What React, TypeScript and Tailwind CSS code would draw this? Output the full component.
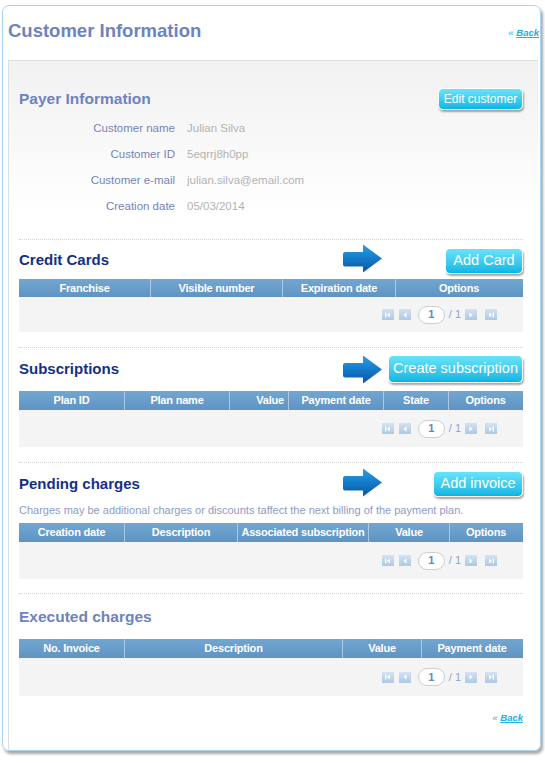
import type { ReactNode } from 'react'

// pagination glyphs, white on pale blue squares
const PagerBtn = ({ kind }: { kind: 'first' | 'prev' | 'next' | 'last' }) => (
    <span className="flex h-[11px] w-[12px] items-center justify-center bg-gradient-to-b from-[#d3e3f2] to-[#adc9e4]">
        <svg width="8" height="6" viewBox="0 0 8 6">
            {kind === 'first' && (
                <>
                    <rect x="1" y="0.5" width="1.3" height="5" fill="#fff" />
                    <path d="M6 0.5 L3 3 L6 5.5Z" fill="#fff" />
                </>
            )}
            {kind === 'prev' && <path d="M5.5 0.5 L2.5 3 L5.5 5.5Z" fill="#fff" />}
            {kind === 'next' && <path d="M2.5 0.5 L5.5 3 L2.5 5.5Z" fill="#fff" />}
            {kind === 'last' && (
                <>
                    <path d="M2 0.5 L5 3 L2 5.5Z" fill="#fff" />
                    <rect x="5.7" y="0.5" width="1.3" height="5" fill="#fff" />
                </>
            )}
        </svg>
    </span>
)

const Pager = () => (
    <div className="flex items-center">
        <PagerBtn kind="first" />
        <span className="ml-[5px]"><PagerBtn kind="prev" /></span>
        <span className="ml-[7px] flex h-[18px] w-[27px] items-center justify-center rounded-[9px] border border-[#cfcfcf] bg-white text-[11px] font-bold text-[#6f84be]">1</span>
        <span className="ml-[4px] text-[11px] text-[#8fa3cf]">/ 1</span>
        <span className="ml-[4px]"><PagerBtn kind="next" /></span>
        <span className="ml-[8px]"><PagerBtn kind="last" /></span>
    </div>
)

const BlueArrow = () => (
    <svg width="41" height="29" viewBox="0 0 41 29">
        <defs>
            <linearGradient id="arrowFill" x1="0" y1="0" x2="0" y2="1">
                <stop offset="0" stopColor="#2b9fe6" />
                <stop offset="0.55" stopColor="#1277c6" />
                <stop offset="1" stopColor="#0a56a3" />
            </linearGradient>
        </defs>
        <path d="M3 8 H21 V0.5 L40 14.5 L21 28.5 V22.5 H3 Q1 22.5 1 20.5 V10 Q1 8 3 8Z" fill="url(#arrowFill)" />
    </svg>
)

const CyanButton = ({ children, className }: { children: ReactNode; className: string }) => (
    <div className={`flex items-center justify-center whitespace-nowrap rounded-[5px] border border-white bg-gradient-to-b from-[#66e3fa] to-[#00b6e4] text-white shadow-[1px_2px_2px_rgba(0,0,0,0.35)] ${className}`}>
        {children}
    </div>
)

interface TableProps {
    grid: string
    cols: string[]
    rightCol?: number
    headH: string
    bodyH: string
}
const Table = ({ grid, cols, rightCol, headH, bodyH }: TableProps) => (
    <div>
        <div className={`grid ${grid} ${headH} bg-gradient-to-b from-[#72a6d2] to-[#5f93c2]`}>
            {cols.map((c, i) => (
                <div
                    key={c + i}
                    className={`flex items-center overflow-hidden whitespace-nowrap text-[11px] font-bold tracking-[-0.2px] text-white ${i > 0 ? 'border-l border-[#a9c9e6]' : ''} ${i === rightCol ? 'justify-end pr-[4px]' : 'justify-center'}`}
                >
                    {c}
                </div>
            ))}
        </div>
        <div className={`flex items-center justify-end bg-[#f4f4f4] pr-[26px] ${bodyH}`}>
            <Pager />
        </div>
    </div>
)

const Divider = () => <div className="border-t border-dotted border-[#d2d2d2]" />

const BackLink = () => (
    <span className="text-[9.5px] italic text-[#22ade6]">
        « <span className="font-bold underline">Back</span>
    </span>
)

const fields = [
    ['Customer name', 'Julian Silva'],
    ['Customer ID', '5eqrrj8h0pp'],
    ['Customer e-mail', 'julian.silva@email.com'],
    ['Creation date', '05/03/2014'],
]

export default function App() {
    return (
        <div className="min-h-[763px] bg-white pt-[5px] pl-[2px] font-['Liberation_Sans',Arial,sans-serif]">
            <div className="h-[746px] w-[539px] overflow-hidden rounded-[7px] border border-[#a8d4f3] shadow-[2px_3px_3px_rgba(0,0,0,0.35)]">
                <div className="flex h-[54px] items-center justify-between pl-[5px] pb-[4px]">
                    <h1 className="text-[18.5px] font-bold text-[#6d83bd]">Customer Information</h1>
                    <span className="mr-[1px]"><BackLink /></span>
                </div>

                <div className="ml-[5px] mr-[2px] border-t border-l border-[#dedede] bg-gradient-to-b from-[#f1f1f1] from-0% to-white to-[22%] pl-[10px] pr-[15px] pt-[27px]">
                    {/* payer */}
                    <div className="flex h-[21px] items-center justify-between">
                        <h2 className="text-[15.5px] font-bold text-[#6d83bd]">Payer Information</h2>
                        <CyanButton className="h-[22px] w-[85px] text-[12px]">Edit customer</CyanButton>
                    </div>
                    <div className="mt-[7px]">
                        {fields.map(([k, v]) => (
                            <div key={k} className="flex h-[26px] items-center text-[11.5px]">
                                <span className="w-[156px] text-right text-[#7683bb]">{k}</span>
                                <span className="ml-[12px] text-[#b3b3b3]">{v}</span>
                            </div>
                        ))}
                    </div>
                    <div className="mt-[19px]"><Divider /></div>

                    {/* credit cards */}
                    <div className="mt-[4px] flex h-[29px] items-center">
                        <h2 className="flex-1 pt-[4px] text-[15px] font-bold text-[#13308a]">Credit Cards</h2>
                        <BlueArrow />
                        <CyanButton className="ml-[62px] mt-[4px] h-[26px] w-[78px] text-[14.5px]">Add Card</CyanButton>
                    </div>
                    <div className="mt-[6px]">
                        <Table
                            grid="grid-cols-[131px_132px_113px_127px]"
                            cols={['Franchise', 'Visible number', 'Expiration date', 'Options']}
                            headH="h-[18px]"
                            bodyH="h-[35px]"
                        />
                    </div>
                    <div className="mt-[15px]"><Divider /></div>

                    {/* subscriptions */}
                    <div className="mt-[7px] flex h-[28px] items-center">
                        <h2 className="flex-1 pt-[1px] text-[15px] font-bold text-[#13308a]">Subscriptions</h2>
                        <BlueArrow />
                        <CyanButton className="ml-[5px] h-[28px] w-[135px] text-[14.5px]">Create subscription</CyanButton>
                    </div>
                    <div className="mt-[8px]">
                        <Table
                            grid="grid-cols-[105px_105px_59px_95px_65px_74px]"
                            cols={['Plan ID', 'Plan name', 'Value', 'Payment date', 'State', 'Options']}
                            rightCol={2}
                            headH="h-[19px]"
                            bodyH="h-[37px]"
                        />
                    </div>
                    <div className="mt-[15px]"><Divider /></div>

                    {/* pending charges */}
                    <div className="mt-[5px] flex h-[29px] items-center">
                        <h2 className="flex-1 pt-[3px] text-[15px] font-bold text-[#13308a]">Pending charges</h2>
                        <BlueArrow />
                        <CyanButton className="ml-[50px] mt-[2px] h-[26px] w-[90px] text-[14.5px]">Add invoice</CyanButton>
                    </div>
                    <p className="mt-[6px] text-[11px] leading-[14px] text-[#8d9bc9]">
                        Charges may be additional charges or discounts taffect the next billing of the payment plan.
                    </p>
                    <div className="mt-[6px]">
                        <Table
                            grid="grid-cols-[105px_113px_131px_81px_73px]"
                            cols={['Creation date', 'Description', 'Associated subscription', 'Value', 'Options']}
                            headH="h-[19px]"
                            bodyH="h-[37px]"
                        />
                    </div>
                    <div className="mt-[14px]"><Divider /></div>

                    {/* executed charges */}
                    <h2 className="mt-[13px] text-[15.5px] font-bold leading-[20px] text-[#6d83bd]">Executed charges</h2>
                    <div className="mt-[12px]">
                        <Table
                            grid="grid-cols-[105px_218px_79px_101px]"
                            cols={['No. Invoice', 'Description', 'Value', 'Payment date']}
                            headH="h-[19px]"
                            bodyH="h-[38px]"
                        />
                    </div>
                    <div className="mt-[15px] flex justify-end pb-[34px]">
                        <BackLink />
                    </div>
                </div>
            </div>
        </div>
    )
}
